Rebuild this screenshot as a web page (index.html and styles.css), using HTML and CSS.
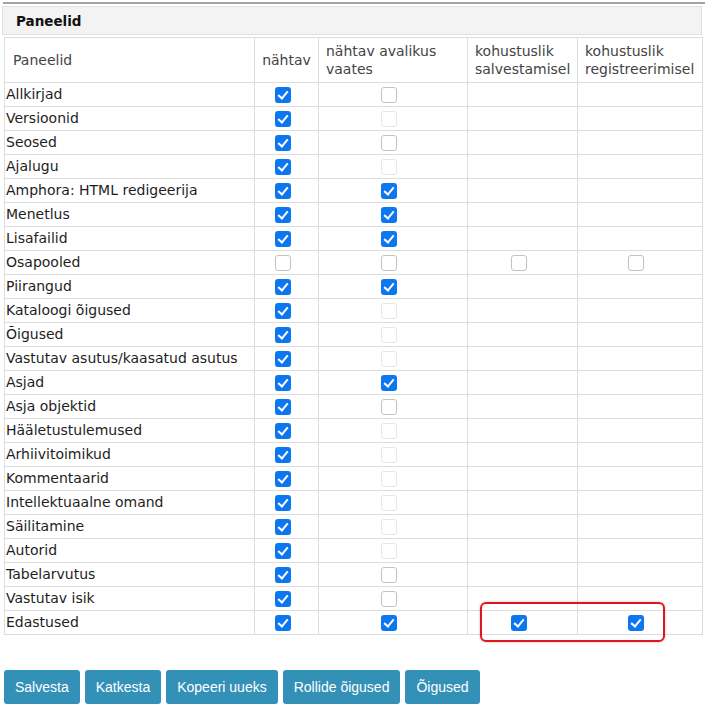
FILE: index.html
```html
<!DOCTYPE html>
<html lang="et">
<head>
    <meta charset="UTF-8">
    <title>Paneelid</title>
    <link rel="stylesheet" href="styles.css">
</head>
<body>
    <div class="topline"></div>
    <div class="panel-title">Paneelid</div>

    <div class="grid-wrap">
        <table class="panels">
            <colgroup>
                <col class="c-name">
                <col class="c-visible">
                <col class="c-public">
                <col class="c-save">
                <col class="c-reg">
            </colgroup>
            <thead>
                <tr>
                    <th>Paneelid</th>
                    <th class="center">nähtav</th>
                    <th>nähtav avalikus vaates</th>
                    <th>kohustuslik salvestamisel</th>
                    <th>kohustuslik registreerimisel</th>
                </tr>
            </thead>
            <tbody>
                <tr><td>Allkirjad</td><td><span class="cb on"></span></td><td><span class="cb"></span></td><td></td><td></td></tr>
                <tr><td>Versioonid</td><td><span class="cb on"></span></td><td><span class="cb dis"></span></td><td></td><td></td></tr>
                <tr><td>Seosed</td><td><span class="cb on"></span></td><td><span class="cb"></span></td><td></td><td></td></tr>
                <tr><td>Ajalugu</td><td><span class="cb on"></span></td><td><span class="cb dis"></span></td><td></td><td></td></tr>
                <tr><td>Amphora: HTML redigeerija</td><td><span class="cb on"></span></td><td><span class="cb on"></span></td><td></td><td></td></tr>
                <tr><td>Menetlus</td><td><span class="cb on"></span></td><td><span class="cb on"></span></td><td></td><td></td></tr>
                <tr><td>Lisafailid</td><td><span class="cb on"></span></td><td><span class="cb on"></span></td><td></td><td></td></tr>
                <tr><td>Osapooled</td><td><span class="cb"></span></td><td><span class="cb"></span></td><td><span class="cb"></span></td><td><span class="cb"></span></td></tr>
                <tr><td>Piirangud</td><td><span class="cb on"></span></td><td><span class="cb on"></span></td><td></td><td></td></tr>
                <tr><td>Kataloogi õigused</td><td><span class="cb on"></span></td><td><span class="cb dis"></span></td><td></td><td></td></tr>
                <tr><td>Õigused</td><td><span class="cb on"></span></td><td><span class="cb dis"></span></td><td></td><td></td></tr>
                <tr><td>Vastutav asutus/kaasatud asutus</td><td><span class="cb on"></span></td><td><span class="cb dis"></span></td><td></td><td></td></tr>
                <tr><td>Asjad</td><td><span class="cb on"></span></td><td><span class="cb on"></span></td><td></td><td></td></tr>
                <tr><td>Asja objektid</td><td><span class="cb on"></span></td><td><span class="cb"></span></td><td></td><td></td></tr>
                <tr><td>Hääletustulemused</td><td><span class="cb on"></span></td><td><span class="cb dis"></span></td><td></td><td></td></tr>
                <tr><td>Arhiivitoimikud</td><td><span class="cb on"></span></td><td><span class="cb dis"></span></td><td></td><td></td></tr>
                <tr><td>Kommentaarid</td><td><span class="cb on"></span></td><td><span class="cb dis"></span></td><td></td><td></td></tr>
                <tr><td>Intellektuaalne omand</td><td><span class="cb on"></span></td><td><span class="cb dis"></span></td><td></td><td></td></tr>
                <tr><td>Säilitamine</td><td><span class="cb on"></span></td><td><span class="cb dis"></span></td><td></td><td></td></tr>
                <tr><td>Autorid</td><td><span class="cb on"></span></td><td><span class="cb dis"></span></td><td></td><td></td></tr>
                <tr><td>Tabelarvutus</td><td><span class="cb on"></span></td><td><span class="cb"></span></td><td></td><td></td></tr>
                <tr><td>Vastutav isik</td><td><span class="cb on"></span></td><td><span class="cb"></span></td><td></td><td></td></tr>
                <tr><td>Edastused</td><td><span class="cb on"></span></td><td><span class="cb on"></span></td><td><span class="cb on"></span></td><td><span class="cb on"></span></td></tr>
            </tbody>
        </table>
        <!-- highlight around the last row's required flags -->
        <div class="mark"></div>
    </div>

    <div class="actions">
        <button class="btn">Salvesta</button>
        <button class="btn">Katkesta</button>
        <button class="btn">Kopeeri uueks</button>
        <button class="btn">Rollide õigused</button>
        <button class="btn">Õigused</button>
    </div>
</body>
</html>
```

FILE: styles.css
```css
body {
    margin: 0;
    font-family: "DejaVu Sans", Verdana, sans-serif;
    font-size: 14px;
    color: #1e1e1e;
    background: #fff;
    width: 705px;
}

.topline {
    margin: 2px 0 0 3px;
    border-top: 2px solid #a3a3a3;
}

.panel-title {
    margin: 2px 3px 0 2px;
    height: 27px;
    line-height: 28px;
    padding-left: 13px;
    background: #f3f3f3;
    border: 1px solid #e0e0e0;
    font-weight: bold;
    font-size: 13.5px;
    color: #111;
}

.grid-wrap {
    position: relative;
    margin: 2px 3px 0 4px;
}

.panels {
    width: 698px;
    border-collapse: collapse;
    table-layout: fixed;
}

.c-name { width: 250px; }
.c-visible { width: 64px; }
.c-public { width: 149px; }
.c-save { width: 110px; }
.c-reg { width: 125px; }

.panels th,
.panels td {
    border: 1px solid #ddd;
}

.panels th {
    height: 44px;
    padding: 0 7px;
    text-align: left;
    font-weight: normal;
    color: #444;
    line-height: 18px;
    vertical-align: middle;
}

.panels th:first-child {
    padding-left: 8px;
}

.panels th.center {
    text-align: center;
    padding: 0;
}

.panels td {
    height: 23px;
    padding: 0 0 0 1px;
    line-height: 23px;
    white-space: nowrap;
}

.panels td + td {
    text-align: center;
    padding: 0;
}

/* checkbox look */
.cb {
    display: inline-block;
    width: 14px;
    height: 14px;
    margin: 4px 8px 0 0;
    vertical-align: top;
    border: 1px solid #c3c3c3;
    border-radius: 3px;
    background: #fff;
    position: relative;
}

.cb.dis {
    border-color: #e6e6e6;
}

.cb.on {
    width: 16px;
    height: 16px;
    border: 0;
    background: #0b77f0;
}

.cb.on::after {
    content: "";
    position: absolute;
    left: 5px;
    top: 2px;
    width: 4px;
    height: 8px;
    border-right: 2.5px solid #fff;
    border-bottom: 2.5px solid #fff;
    transform: rotate(40deg);
}

.mark {
    position: absolute;
    left: 476px;
    top: 565px;
    width: 181px;
    height: 36px;
    border: 2px solid #e3131b;
    border-radius: 6px;
    box-shadow: 0 0 3px rgba(0, 0, 0, 0.25);
}

.actions {
    margin: 35px 0 0 4px;
    display: flex;
    gap: 5px;
}

.btn {
    height: 34px;
    padding: 0 11px;
    border: 0;
    border-radius: 3px;
    background: #3391b8;
    color: #fff;
    font-family: "Liberation Sans", Arial, sans-serif;
    font-size: 14px;
}
```
